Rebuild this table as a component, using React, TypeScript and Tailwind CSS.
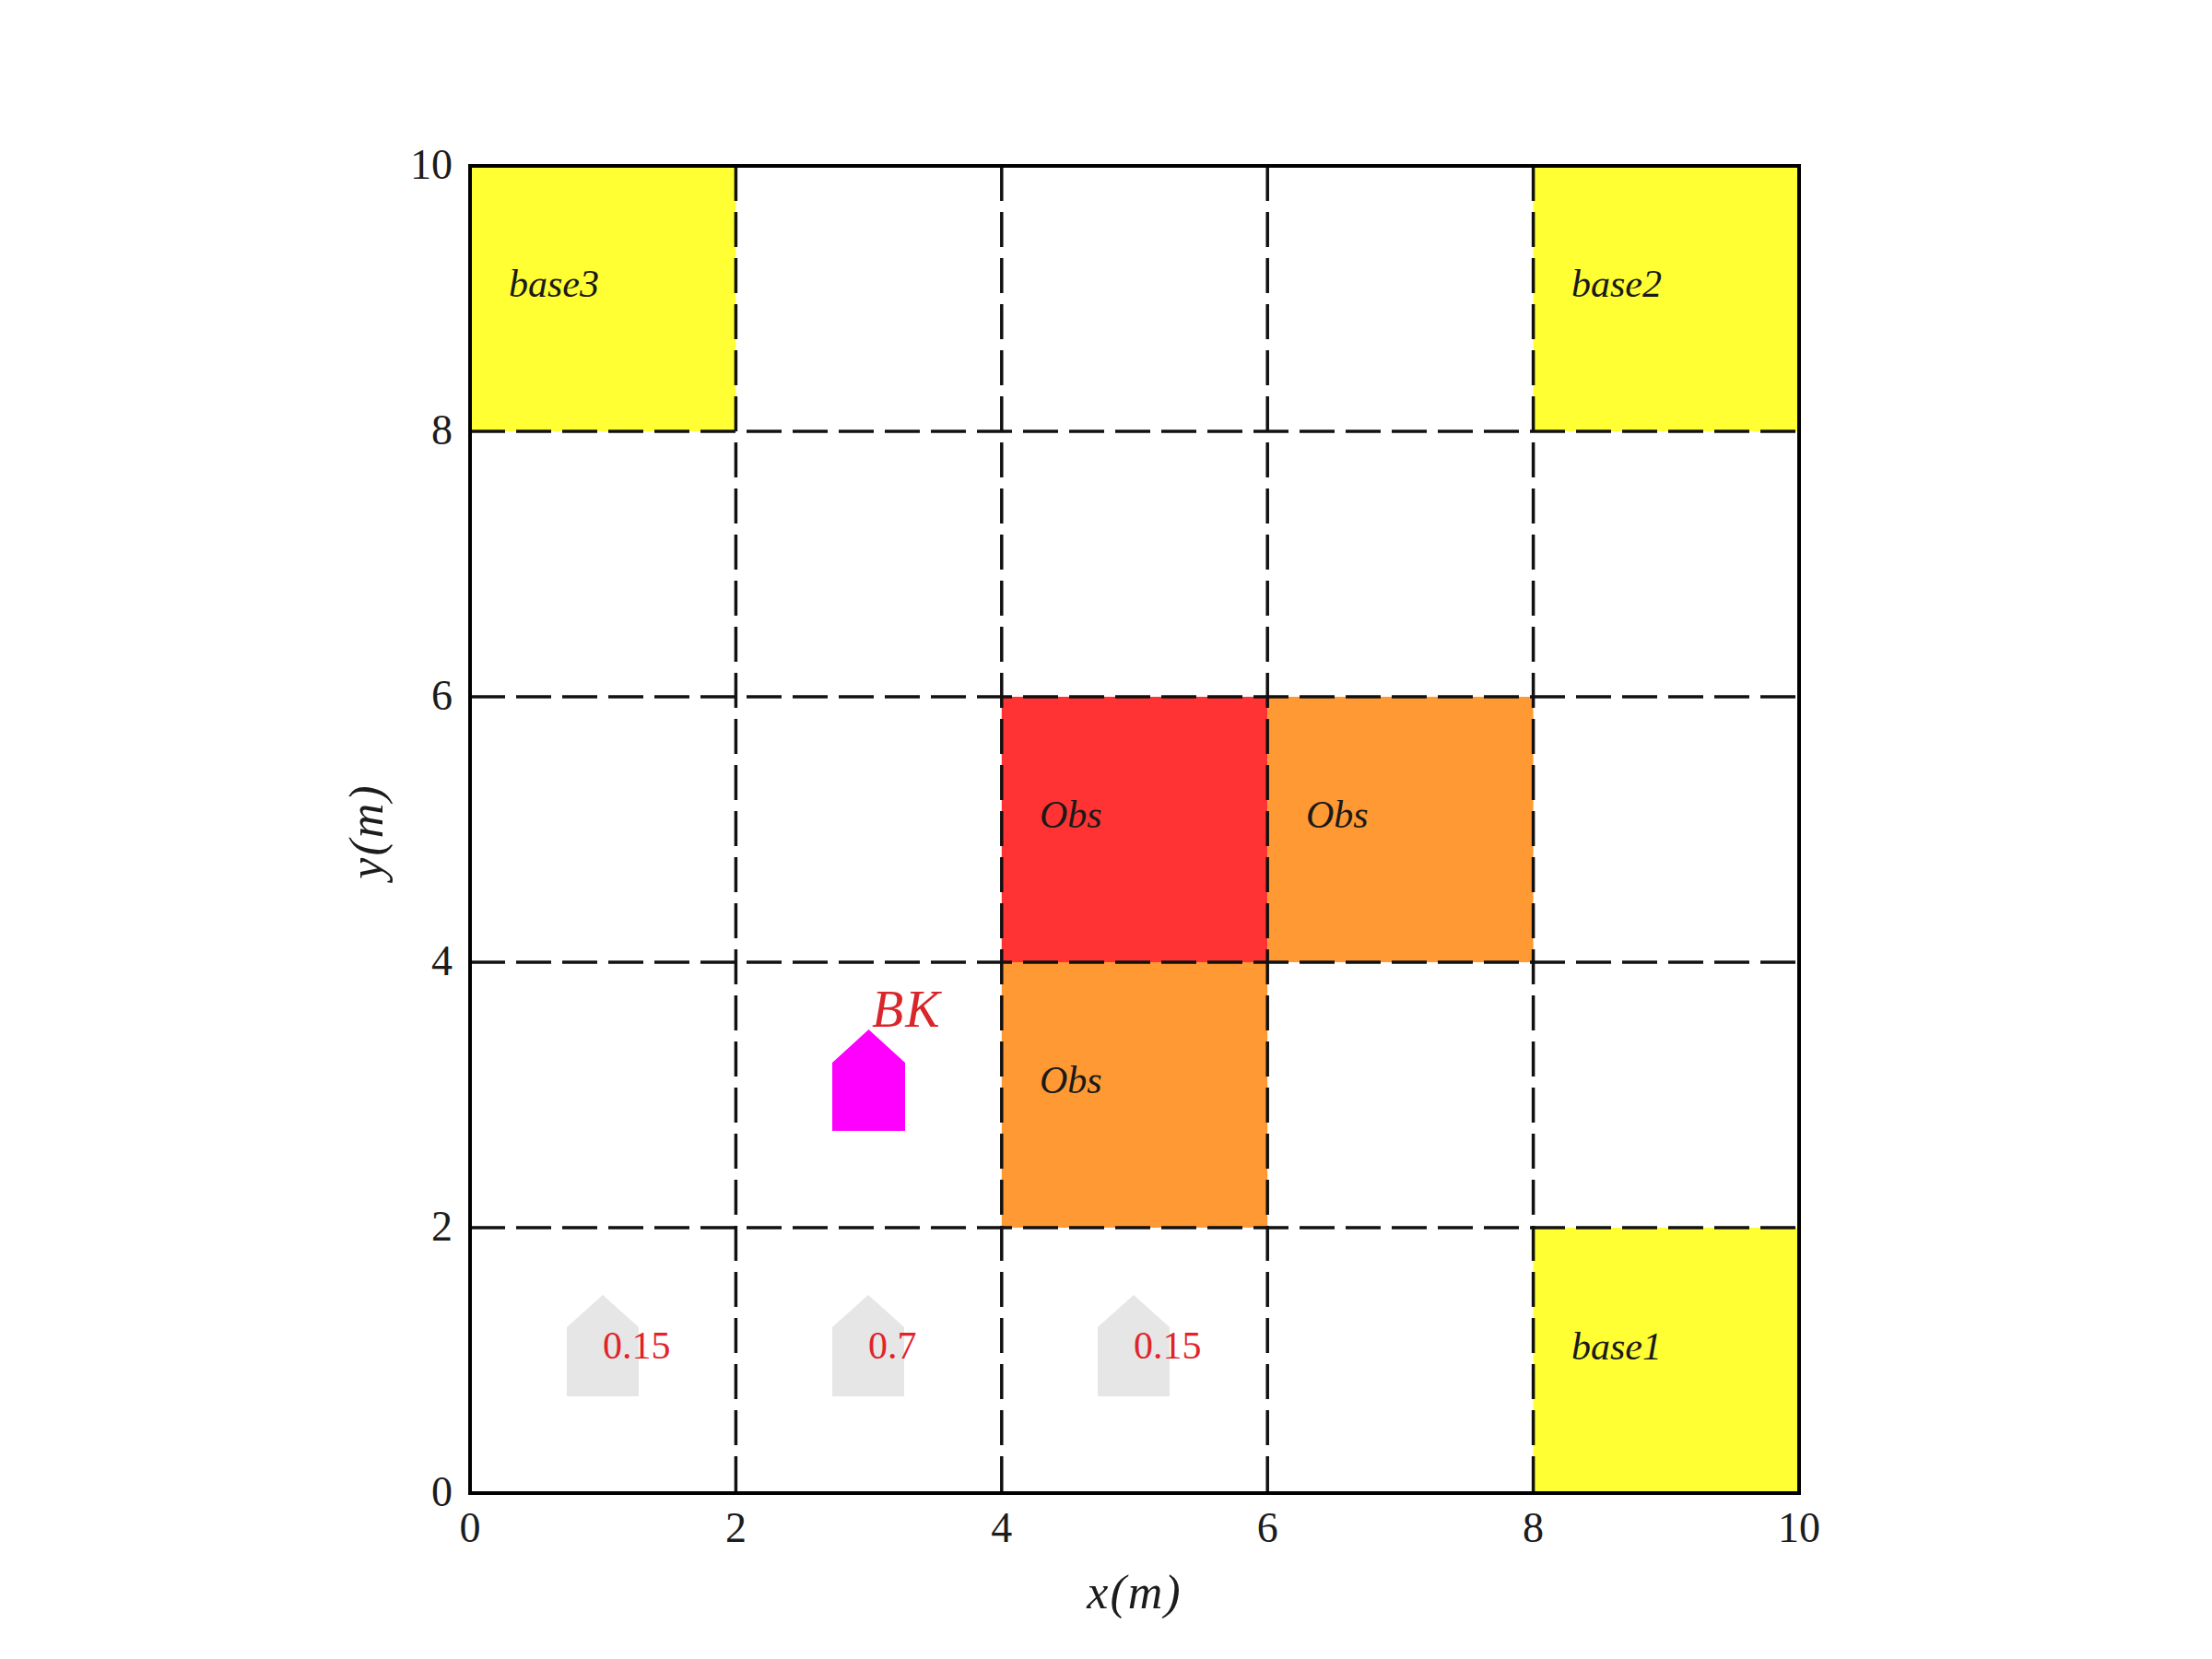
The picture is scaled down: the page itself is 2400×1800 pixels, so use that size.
import React from 'react'

const X = (d: number) => 510 + d * 144.2
const Y = (d: number) => 1620 - d * 144

const cells = [
  { x: 0, y: 8, fill: '#ffff33' },
  { x: 8, y: 8, fill: '#ffff33' },
  { x: 8, y: 0, fill: '#ffff33' },
  { x: 4, y: 4, fill: '#ff3333' },
  { x: 6, y: 4, fill: '#ff9933' },
  { x: 4, y: 2, fill: '#ff9933' },
]

const labels = [
  { text: 'base3', x: 552, y: 322 },
  { text: 'base2', x: 1705, y: 322 },
  { text: 'base1', x: 1705, y: 1475 },
  { text: 'Obs', x: 1128, y: 898 },
  { text: 'Obs', x: 1417, y: 898 },
  { text: 'Obs', x: 1128, y: 1186 },
]

const probes = [
  { cx: 654, value: '0.15' },
  { cx: 942, value: '0.7' },
  { cx: 1230, value: '0.15' },
]

const serif = "'Liberation Serif', 'DejaVu Serif', serif"

function house(cx: number, peak: number, shoulder: number, bottom: number, half: number) {
  return `${cx - half},${bottom} ${cx - half},${shoulder} ${cx},${peak} ${cx + half},${shoulder} ${cx + half},${bottom}`
}

export default function App() {
  const ticks = [0, 2, 4, 6, 8, 10]
  return (
    <div className="w-[2400px] h-[1800px] bg-white flex font-['Liberation_Serif',serif] text-[#1c1c1c]">
      {/* y axis title */}
      <div className="w-[430px] pl-[366px] pt-[182px]">
        <div className="h-[1440px] w-[64px] flex items-center justify-center">
          <span className="-rotate-90 whitespace-nowrap italic text-[52px] leading-[52px] tracking-[2px]">y(m)</span>
        </div>
      </div>

      <div className="pt-[130px] flex flex-col">
        <svg width={1570} height={1560} viewBox="430 130 1570 1560" className="block">
          {/* coloured cells */}
          {cells.map((c, i) => (
            <rect key={i} x={X(c.x)} y={Y(c.y + 2)} width={X(c.x + 2) - X(c.x)} height={Y(c.y) - Y(c.y + 2)} fill={c.fill} />
          ))}

          {/* dashed grid */}
          {[2, 4, 6, 8].map((d) => (
            <g key={d} stroke="#111" strokeWidth={3.5} strokeDasharray="38 12">
              <line x1={X(d)} y1={Y(10)} x2={X(d)} y2={Y(0)} />
              <line x1={X(0)} y1={Y(d)} x2={X(10)} y2={Y(d)} />
            </g>
          ))}

          {/* frame */}
          <rect x={X(0)} y={Y(10)} width={X(10) - X(0)} height={Y(0) - Y(10)} fill="none" stroke="#000" strokeWidth={4} />

          {/* cell labels */}
          {labels.map((l, i) => (
            <text key={i} x={l.x} y={l.y} fontFamily={serif} fontStyle="italic" fontSize={42} fill="#1a1a1a">
              {l.text}
            </text>
          ))}

          {/* probability markers */}
          {probes.map((p, i) => (
            <g key={i}>
              <polygon points={house(p.cx, 1405, 1440, 1515, 39)} fill="#e6e6e6" />
              <text x={p.cx} y={1474} fontFamily={serif} fontSize={42} fill="#e0242a">
                {p.value}
              </text>
            </g>
          ))}

          {/* robot */}
          <polygon points={house(942.5, 1117, 1153, 1227, 39.5)} fill="#ff00ff" />
          <text x={946} y={1114} fontFamily={serif} fontStyle="italic" fontSize={56} letterSpacing={2} fill="#d9262b">
            BK
          </text>

          {/* tick labels */}
          {ticks.map((t) => (
            <g key={t} fontFamily={serif} fontSize={46} fill="#1c1c1c">
              <text x={491} y={Y(t) + 14} textAnchor="end">{t}</text>
              <text x={X(t)} y={1673} textAnchor="middle">{t}</text>
            </g>
          ))}
        </svg>

        {/* x axis title */}
        <div className="ml-[80px] w-[1442px] mt-[12px] text-center italic text-[52px] leading-[52px] tracking-[2px]">x(m)</div>
      </div>
    </div>
  )
}
